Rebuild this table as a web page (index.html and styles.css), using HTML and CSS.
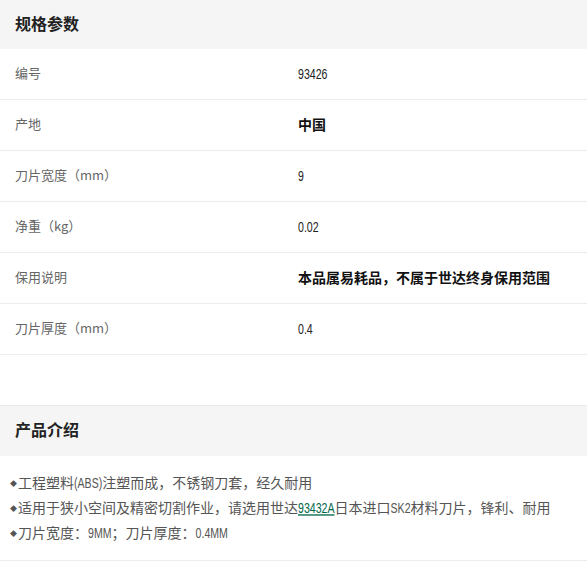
FILE: index.html
```html
<!DOCTYPE html>
<html lang="zh-CN">
<head>
<meta charset="utf-8">
<title>规格参数</title>
<link rel="stylesheet" href="styles.css">
</head>
<body>
<section class="spec">
  <h2 class="band">规格参数</h2>
  <div class="row"><div class="label">编号</div><div class="value"><span class="n">93426</span></div></div>
  <div class="row"><div class="label">产地</div><div class="value strong">中国</div></div>
  <div class="row"><div class="label">刀片宽度（mm）</div><div class="value"><span class="n">9</span></div></div>
  <div class="row"><div class="label">净重（kg）</div><div class="value"><span class="n">0.02</span></div></div>
  <div class="row"><div class="label">保用说明</div><div class="value strong">本品属易耗品，不属于世达终身保用范围</div></div>
  <div class="row"><div class="label">刀片厚度（mm）</div><div class="value"><span class="n">0.4</span></div></div>
</section>
<section class="intro">
  <h2 class="band band-top">产品介绍</h2>
  <ul class="points">
    <li><span class="dot">◆</span>工程塑料<span class="n">(ABS)</span>注塑而成，不锈钢刀套，经久耐用</li>
    <li><span class="dot">◆</span>适用于狭小空间及精密切割作业，请选用世达<a class="link" href="#"><span class="n u">93432A</span></a>日本进口<span class="n">SK2</span>材料刀片，锋利、耐用</li>
    <li><span class="dot">◆</span>刀片宽度：<span class="n">9MM</span>；刀片厚度：<span class="n">0.4MM</span></li>
  </ul>
</section>
</body>
</html>
```
FILE: styles.css
```css
* { box-sizing: border-box; }
body {
  margin: 0;
  width: 587px;
  background: #fff;
  font-family: "Noto Sans CJK SC", sans-serif;
  color: #333;
}
.band {
  margin: 0;
  height: 49px;
  display: flex;
  align-items: center;
  padding: 0 0 3px 15px;
  background: #f5f5f5;
  font-size: 16px;
  font-weight: 700;
  color: #222;
}
.band-top {
  height: 51px;
  padding-bottom: 5px;
  border-top: 1px solid #ebebeb;
}
.spec { padding-bottom: 50px; }
.row {
  display: flex;
  align-items: center;
  height: 51px;
  padding-bottom: 3px;
  border-bottom: 1px solid #ececec;
  font-size: 13px;
}
.label {
  width: 298px;
  padding-left: 15px;
  color: #666;
}
.value {
  color: #222;
  font-size: 14px;
}
.strong {
  font-weight: 700;
  color: #111;
}
.n {
  display: inline-block;
  font-family: "Liberation Sans", sans-serif;
  font-size: 10.6px;
  line-height: 1;
  transform: scaleY(1.32);
  transform-origin: 50% 85%;
}
.u { text-decoration: underline; }
.points {
  list-style: none;
  margin: 0;
  padding: 14px 0 15px 10px;
  border-bottom: 1px solid #ececec;
  font-size: 14px;
  line-height: 25px;
  color: #555;
}
.dot {
  display: inline-block;
  width: 8px;
  font-size: 7px;
  line-height: 1;
  color: #555;
  vertical-align: 2px;
}
.link {
  color: #00664a;
  text-decoration: none;
}
```
